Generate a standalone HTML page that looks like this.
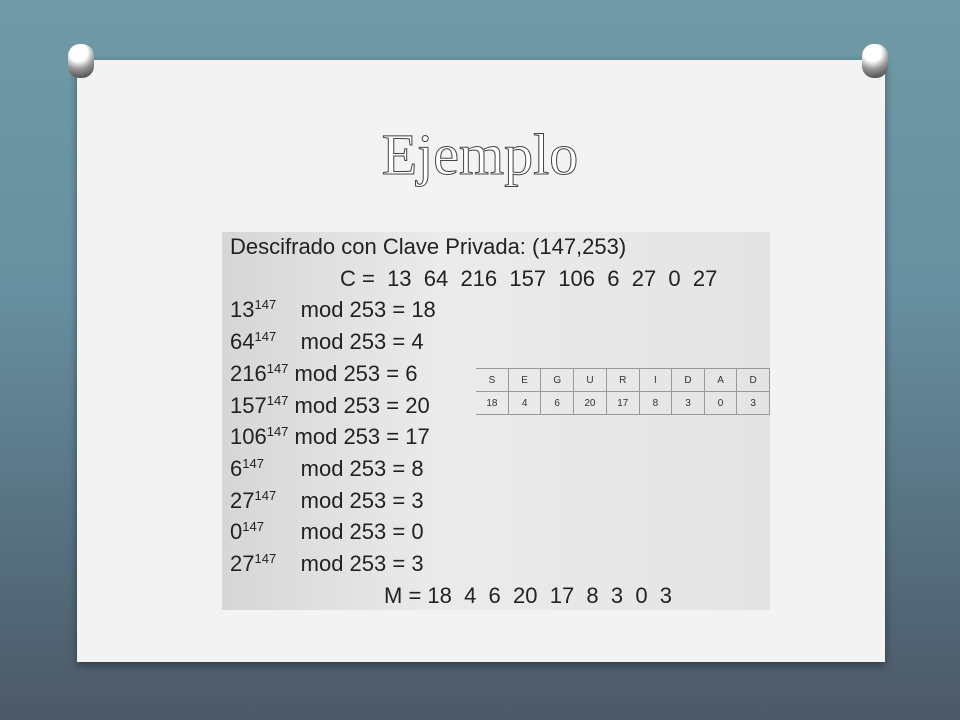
<!DOCTYPE html>
<html><head><meta charset="utf-8"><style>
body{margin:0;width:960px;height:720px;overflow:hidden;background:linear-gradient(180deg,#6f9aa6 0%,#6890a0 40%,#56707f 75%,#4c5868 100%);position:relative;font-family:"Liberation Sans",sans-serif}
.card{position:absolute;left:77px;top:60px;width:808px;height:602px;background:#f3f3f3;box-shadow:0 3px 8px rgba(0,0,0,.4)}
.pin{position:absolute;width:26px;height:34px;border-radius:12px;background:radial-gradient(circle at 40% 25%,#fff 0 30%,#999 55%,#333 100%)}
h1{position:absolute;left:0;width:960px;top:121px;margin:0;text-align:center;font-family:"Liberation Serif",serif;font-weight:normal;font-size:58px;color:#fff;-webkit-text-stroke:1px #444}
.box{position:absolute;left:222px;top:232px;width:548px;height:378px;background:linear-gradient(90deg,#d6d6d6,#ebebeb 40%,#e4e4e4)}
.l{position:absolute;left:8px;font-size:22px;color:#222;white-space:pre;line-height:26px}
sup{font-size:13px;vertical-align:8px;line-height:0}
table{position:absolute;left:254px;top:136px;border-collapse:collapse;font-size:10px;color:#333}
td{width:31px;height:20px;text-align:center;border-right:1px solid #999;border-bottom:1px solid #999}
tr:first-child td{border-top:1px solid #999}
</style></head><body>
<div class="card"></div>
<div class="pin" style="left:68px;top:44px"></div>
<div class="pin" style="left:862px;top:44px"></div>
<h1>Ejemplo</h1>
<div class="box">
<div class="l" style="top:2px">Descifrado con Clave Privada: (147,253)</div>
<div class="l" style="top:34px;left:118px">C =  13  64  216  157  106  6  27  0  27</div>
<div class="l" style="top:65px">13<sup>147</sup>    mod 253 = 18</div>
<div class="l" style="top:97px">64<sup>147</sup>    mod 253 = 4</div>
<div class="l" style="top:129px">216<sup>147</sup> mod 253 = 6</div>
<div class="l" style="top:161px">157<sup>147</sup> mod 253 = 20</div>
<div class="l" style="top:192px">106<sup>147</sup> mod 253 = 17</div>
<div class="l" style="top:224px">6<sup>147</sup>      mod 253 = 8</div>
<div class="l" style="top:256px">27<sup>147</sup>    mod 253 = 3</div>
<div class="l" style="top:287px">0<sup>147</sup>      mod 253 = 0</div>
<div class="l" style="top:319px">27<sup>147</sup>    mod 253 = 3</div>
<div class="l" style="top:351px;left:162px">M = 18  4  6  20  17  8  3  0  3</div>
<table><tr><td>S</td><td>E</td><td>G</td><td>U</td><td>R</td><td>I</td><td>D</td><td>A</td><td>D</td></tr>
<tr><td>18</td><td>4</td><td>6</td><td>20</td><td>17</td><td>8</td><td>3</td><td>0</td><td>3</td></tr></table>
</div>
</body></html>
